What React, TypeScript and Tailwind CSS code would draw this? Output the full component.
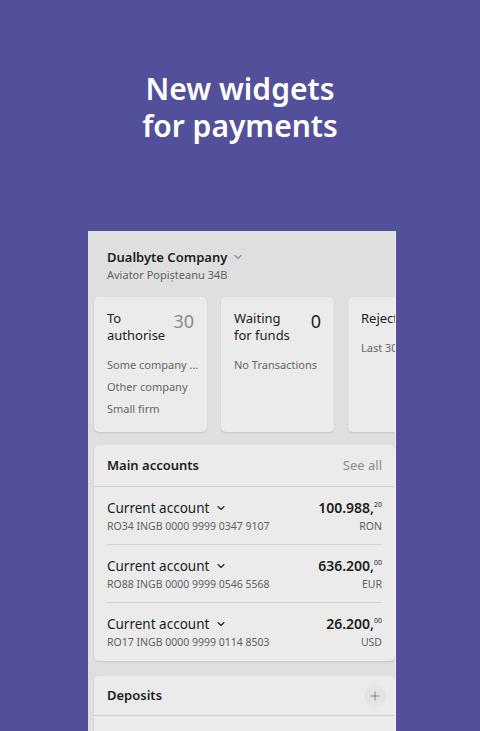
import React from "react";
import { ChevronDown, Plus } from "lucide-react";

const accounts = [
  { iban: "RO34 INGB 0000 9999 0347 9107", whole: "100.988,", cents: "20", cur: "RON" },
  { iban: "RO88 INGB 0000 9999 0546 5568", whole: "636.200,", cents: "00", cur: "EUR" },
  { iban: "RO17 INGB 0000 9999 0114 8503", whole: "26.200,", cents: "00", cur: "USD" },
];

function Widget({ title, count, light, items }: { title: string[]; count: string; light?: boolean; items: string[] }) {
  return (
    <div className="w-[113px] h-[135px] shrink-0 rounded-[5px] bg-[#ebebeb] shadow-[0_1px_2px_rgba(0,0,0,0.12)] px-[13px] pt-[13px]">
      <div className="flex justify-between">
        <p className="text-[13px] leading-[17px] text-[#222]">
          {title[0]}
          <br />
          {title[1]}
        </p>
        <span className={`text-[18px] leading-[22px] ${light ? "text-[#8a8a8a]" : "text-[#222]"}`}>{count}</span>
      </div>
      <div className="mt-[14px] flex flex-col gap-[8px]">
        {items.map((t) => (
          <p key={t} className="text-[11px] leading-[14px] text-[#666] whitespace-nowrap">
            {t}
          </p>
        ))}
      </div>
    </div>
  );
}

export default function App() {
  return (
    <div className="w-[480px] h-[731px] overflow-hidden bg-[#52509a] font-['Noto_Sans',sans-serif]">
      <h1 className="pt-[70px] text-center text-white text-[30px] leading-[37px] font-semibold">
        New widgets
        <br />
        for payments
      </h1>

      <div className="mt-[87px] ml-[88px] w-[308px] h-[520px] overflow-hidden bg-[#dfdfdf] border-r border-[#f2f2f2]">
        <div className="px-[19px] pt-[17px]">
          <div className="flex items-center gap-[5px]">
            <span className="text-[13px] leading-[18px] font-semibold text-[#1d1d1d]">Dualbyte Company</span>
            <ChevronDown size={12} strokeWidth={1.8} className="text-[#444]" />
          </div>
          <p className="mt-[2px] text-[11px] leading-[14px] text-[#5f5f5f]">Aviator Popișteanu 34B</p>
        </div>

        <div className="mt-[15px] ml-[6px] flex gap-[14px]">
          <Widget title={["To", "authorise"]} count="30" light items={["Some company ...", "Other company", "Small firm"]} />
          <Widget title={["Waiting", "for funds"]} count="0" items={["No Transactions"]} />
          <Widget title={["Rejected", ""]} count="" items={["Last 30 days"]} />
        </div>

        <div className="mt-[13px] ml-[6px] rounded-[5px] bg-[#ebebeb] shadow-[0_1px_2px_rgba(0,0,0,0.12)]">
          <div className="flex items-center justify-between h-[42px] pl-[13px] pr-[13px] border-b border-[#d2d2d2]">
            <span className="text-[13px] font-semibold text-[#1d1d1d]">Main accounts</span>
            <span className="text-[13px] text-[#8a8a8a]">See all</span>
          </div>
          {accounts.map((a, i) => (
            <div key={a.iban} className={`mx-[13px] h-[58px] flex justify-between items-center ${i < 2 ? "border-b border-[#d2d2d2]" : ""}`}>
              <div>
                <div className="flex items-center gap-[6px]">
                  <span className="text-[13.5px] leading-[18px] text-[#1d1d1d]">Current account</span>
                  <ChevronDown size={12} strokeWidth={2.2} className="text-[#222]" />
                </div>
                <p className="mt-[2px] text-[10.5px] leading-[14px] text-[#5f5f5f]">{a.iban}</p>
              </div>
              <div className="text-right">
                <p className="text-[14px] leading-[18px] font-semibold text-[#1d1d1d]">
                  {a.whole}
                  <sup className="text-[7px] font-normal top-[-0.8em]">{a.cents}</sup>
                </p>
                <p className="mt-[2px] text-[10.5px] leading-[14px] text-[#5f5f5f]">{a.cur}</p>
              </div>
            </div>
          ))}
        </div>

        <div className="mt-[15px] ml-[6px] rounded-[5px] bg-[#ebebeb] shadow-[0_1px_2px_rgba(0,0,0,0.12)] h-[80px]">
          <div className="flex items-center justify-between h-[40px] pl-[13px] pr-[9px] border-b border-[#d2d2d2]">
            <span className="text-[13px] font-semibold text-[#1d1d1d]">Deposits</span>
            <span className="w-[22px] h-[22px] rounded-full bg-[#e4e4e4] flex items-center justify-center">
              <Plus size={14} strokeWidth={1.2} className="text-[#666]" />
            </span>
          </div>
        </div>
      </div>
    </div>
  );
}
